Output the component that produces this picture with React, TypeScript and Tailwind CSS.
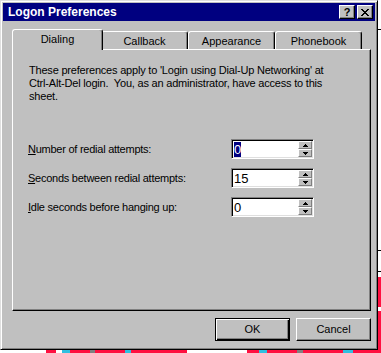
import React from "react";

const xRows = ["11000011", "01100110", "00111100", "00011000", "00111100", "01100110", "11000011"];

function CloseGlyph() {
  return (
    <svg width="8" height="7" viewBox="0 0 8 7" shapeRendering="crispEdges">
      {xRows.flatMap((row, y) =>
        row.split("").map((c, x) => (c === "1" ? <rect key={`${x}-${y}`} x={x} y={y} width="1" height="1" fill="#000" /> : null))
      )}
    </svg>
  );
}

function UpArrow() {
  return (
    <svg width="5" height="3" viewBox="0 0 5 3" shapeRendering="crispEdges">
      <path d="M2 0h1v1h1v1h1v1H0V2h1V1h1z" fill="#000" />
    </svg>
  );
}

function DownArrow() {
  return (
    <svg width="5" height="3" viewBox="0 0 5 3" shapeRendering="crispEdges">
      <path d="M0 0h5v1H4v1H3v1H2V2H1V1H0z" fill="#000" />
    </svg>
  );
}

function Spin({ value, selected }: { value: string; selected?: boolean }) {
  return (
    <div className="w-[83px] h-[20px] bg-white flex border border-t-[#808080] border-l-[#808080] border-r-white border-b-white shadow-[inset_1px_1px_0_#000,inset_-1px_-1px_0_#dfdfdf] p-[1px]">
      <div className="flex-1 flex items-center pl-[1px] text-[13px] leading-[15px]">
        {selected ? <span className="bg-[#000080] text-white h-[15px]">{value}</span> : <span>{value}</span>}
      </div>
      <div className="w-[14px] flex flex-col">
        <div className="h-[8px] bg-[#c0c0c0] flex items-center justify-center border border-t-white border-l-white border-r-[#808080] border-b-[#808080]">
          <UpArrow />
        </div>
        <div className="h-[8px] bg-[#c0c0c0] flex items-center justify-center border border-t-white border-l-white border-r-[#808080] border-b-[#808080]">
          <DownArrow />
        </div>
      </div>
    </div>
  );
}

function Row({ first, rest, value, selected }: { first: string; rest: string; value: string; selected?: boolean }) {
  return (
    <div className="flex items-center h-[20px]">
      <div className="w-[203px] -ml-[1px] pr-[1px] text-[11px] leading-[13px] tracking-[-0.25px]">
        <span className="underline underline-offset-[1px]">{first}</span>
        {rest}
      </div>
      <Spin value={value} selected={selected} />
    </div>
  );
}

function Tab({ label, selected }: { label: string; selected?: boolean }) {
  if (selected) {
    return (
      <div className="relative z-10 w-[91px] h-[21px] -mx-[2px] -mb-[1px] bg-[#c0c0c0] border-l border-t border-r border-l-white border-t-white border-r-black rounded-t-[3px] shadow-[inset_-1px_0_0_#808080] text-center pt-[3px] text-[11px] leading-[13px]">
        {label}
      </div>
    );
  }
  return (
    <div className="w-[87px] h-[18px] bg-[#c0c0c0] border-l border-t border-r border-l-white border-t-white border-r-black rounded-t-[3px] shadow-[inset_-1px_0_0_#808080] text-center pt-[3px] text-[11px] leading-[13px]">
      {label}
    </div>
  );
}

export default function App() {
  return (
    <div className="w-[381px] h-[353px] bg-white overflow-hidden font-['Liberation_Sans',Arial,sans-serif] text-black">
      <div className="flex">
        <div className="w-[378px] h-[350px] bg-[#c0c0c0] border border-t-[#dfdfdf] border-l-[#dfdfdf] border-r-black border-b-black shadow-[inset_1px_1px_0_#fff,inset_-1px_-1px_0_#808080] p-[2px] flex flex-col">
          <div className="h-[18px] bg-[#000080] flex items-center pl-[5px] pr-[2px]">
            <div className="flex-1 text-white font-bold text-[12px] leading-[14px]">Logon Preferences</div>
            <div className="w-[16px] h-[14px] bg-[#c0c0c0] border border-t-white border-l-white border-r-black border-b-black shadow-[inset_-1px_-1px_0_#808080] flex items-center justify-center text-[11px] font-bold leading-[11px]">
              ?
            </div>
            <div className="w-[16px] h-[14px] ml-[2px] bg-[#c0c0c0] border border-t-white border-l-white border-r-black border-b-black shadow-[inset_-1px_-1px_0_#808080] flex items-center justify-center">
              <CloseGlyph />
            </div>
          </div>
          <div className="pl-[9px] pr-[4px] pt-[8px] flex flex-col">
            <div className="h-[20px] flex items-end pl-[2px]">
              <Tab label="Dialing" selected />
              <Tab label="Callback" />
              <Tab label="Appearance" />
              <Tab label="Phonebook" />
            </div>
            <div className="h-[262px] border border-t-white border-l-white border-r-black border-b-black shadow-[inset_-1px_-1px_0_#808080] pl-[16px] pt-[14px]">
              <p className="text-[11px] leading-[13px] tracking-[-0.2px] whitespace-pre">
                {"These preferences apply to 'Login using Dial-Up Networking' at\nCtrl-Alt-Del login.  You, as an administrator, have access to this\nsheet."}
              </p>
              <div className="mt-[36px] flex flex-col gap-[9px]">
                <Row first="N" rest="umber of redial attempts:" value="0" selected />
                <Row first="S" rest="econds between redial attempts:" value="15" />
                <Row first="I" rest="dle seconds before hanging up:" value="0" />
              </div>
            </div>
            <div className="mt-[7px] flex justify-end gap-[6px]">
              <div className="w-[75px] h-[23px] border border-black shadow-[inset_1px_1px_0_#fff,inset_-1px_-1px_0_#000,inset_-2px_-2px_0_#808080] flex items-center justify-center text-[11px]">
                OK
              </div>
              <div className="w-[75px] h-[23px] border border-t-white border-l-white border-r-black border-b-black shadow-[inset_-1px_-1px_0_#808080] flex items-center justify-center text-[11px]">
                Cancel
              </div>
            </div>
          </div>
        </div>
        <div className="w-[3px] h-[350px] flex flex-col bg-white">
          <div className="h-[29px]" />
          <div className="h-[1px] bg-black" />
          <div className="h-[220px]" />
          <div className="h-[1px] bg-black" />
          <div className="h-[20px]" />
          <div className="h-[1px] bg-black" />
          <div className="h-[5px]" />
          <div className="h-[30px] bg-[#ff1040]" />
          <div className="h-[4px] bg-white" />
          <div className="h-[39px] bg-[#ff1040]" />
        </div>
      </div>
      <div className="h-[3px] flex">
        <div className="w-[46px] bg-white" />
        <div className="w-[10px] bg-[#ff1040]" />
        <div className="w-[6px] bg-white" />
        <div className="w-[8px] bg-[#30c0e0]" />
        <div className="w-[20px] bg-[#ff1040]" />
        <div className="w-[5px] bg-[#808080]" />
        <div className="w-[30px] bg-[#ff1040]" />
        <div className="w-[6px] bg-[#30c0e0]" />
        <div className="w-[56px] bg-[#ff1040]" />
        <div className="w-[60px] bg-white" />
        <div className="w-[12px] bg-[#ff1040]" />
        <div className="w-[8px] bg-[#30c0e0]" />
        <div className="w-[30px] bg-[#ff1040]" />
        <div className="w-[6px] bg-[#808080]" />
        <div className="w-[40px] bg-[#ff1040]" />
        <div className="w-[10px] bg-[#30c0e0]" />
        <div className="flex-1 bg-[#ff1040]" />
      </div>
    </div>
  );
}
